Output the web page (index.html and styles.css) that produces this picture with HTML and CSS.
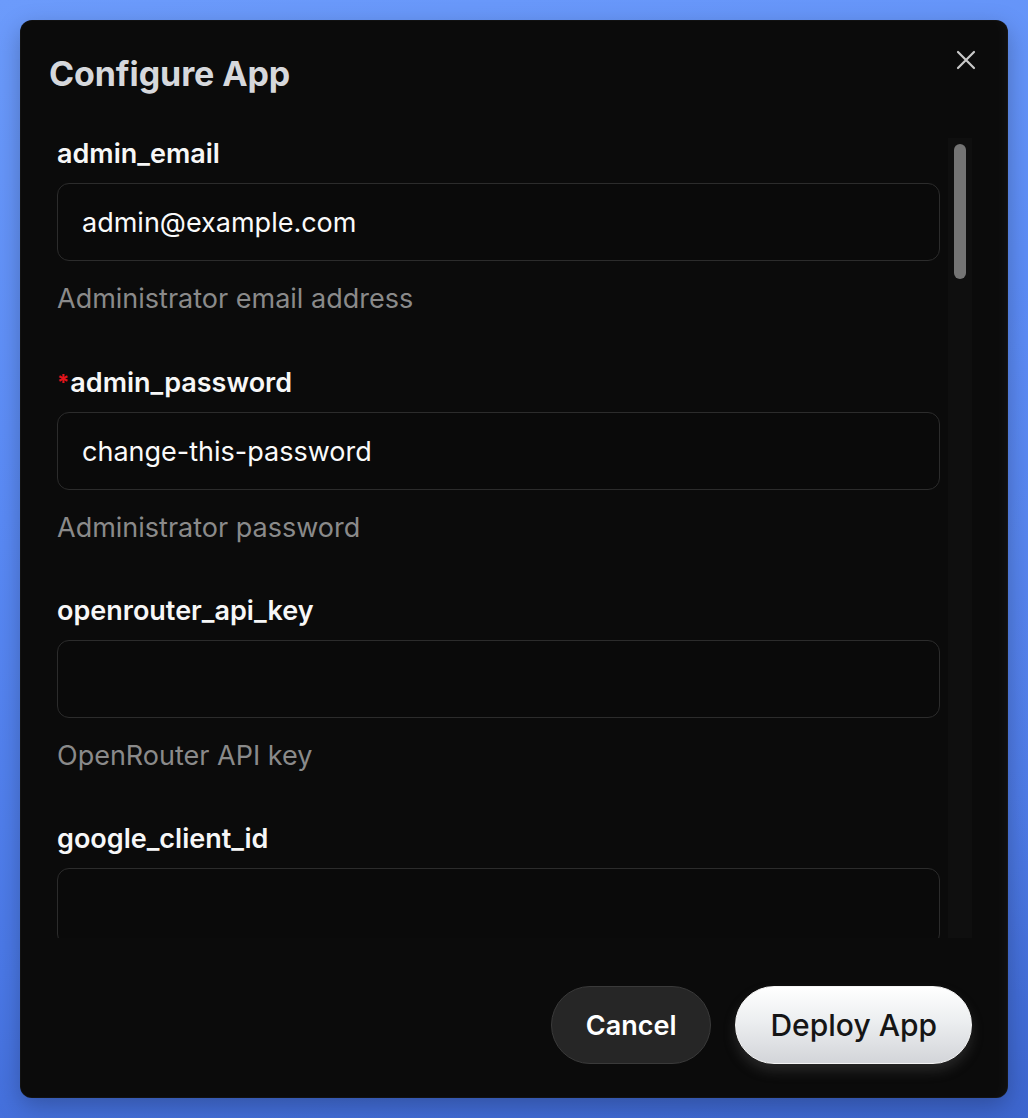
FILE: index.html
```html
<!DOCTYPE html>
<html lang="en">
<head>
<meta charset="utf-8">
<title>Configure App</title>
<link rel="stylesheet" href="styles.css">
</head>
<body>
<div class="backdrop">
  <div class="modal">
    <h2 class="title">Configure App</h2>
    <button class="close" aria-label="Close">
      <svg viewBox="0 0 24 24" width="24" height="24"><path d="M4 4L20 20M20 4L4 20" stroke="#c9c9c9" stroke-width="2.2" stroke-linecap="round" fill="none"/></svg>
    </button>
    <div class="scroll-wrap">
      <div class="scroll">
        <div class="field">
          <label class="label">admin_email</label>
          <input class="input" type="text" value="admin@example.com">
          <p class="help">Administrator email address</p>
        </div>
        <div class="field">
          <label class="label"><span class="req">*</span>admin_password</label>
          <input class="input" type="text" value="change-this-password">
          <p class="help">Administrator password</p>
        </div>
        <div class="field">
          <label class="label">openrouter_api_key</label>
          <input class="input" type="text" value="">
          <p class="help">OpenRouter API key</p>
        </div>
        <div class="field">
          <label class="label">google_client_id</label>
          <input class="input" type="text" value="">
        </div>
      </div>
      <div class="scrollbar"><div class="thumb"></div></div>
    </div>
    <div class="actions">
      <button class="btn btn-cancel">Cancel</button>
      <button class="btn btn-deploy">Deploy App</button>
    </div>
  </div>
</div>
</body>
</html>
```

FILE: styles.css
```css
* { box-sizing: border-box; }
html, body { margin: 0; padding: 0; }
body {
  width: 1028px;
  height: 1118px;
  overflow: hidden;
  font-family: Inter, "Noto Sans", "Liberation Sans", sans-serif;
  background:
    radial-gradient(ellipse 500px 700px at 1250px 650px, rgba(255,255,255,0.08), rgba(255,255,255,0) 70%),
    linear-gradient(170deg, #6c9bfb 0%, #5a8af5 40%, #4a78e6 75%, #3d66cf 100%);
}
.backdrop {
  padding: 20px;
  height: 1118px;
}
.modal {
  position: relative;
  width: 988px;
  height: 1078px;
  background: #0b0b0b;
  border-radius: 12px;
  box-shadow: 0 8px 24px rgba(0, 0, 0, 0.25), inset 0 0 0 1px rgba(255,255,255,0.03), inset -14px 0 14px -10px rgba(255,255,255,0.03);
  padding: 34px 36px 34px 29px;
  display: flex;
  flex-direction: column;
}
.title {
  margin: 0;
  font-size: 34px;
  line-height: 40px;
  font-weight: 700;
  color: #d6d8dc;
  letter-spacing: -0.1px;
}
.close {
  position: absolute;
  top: 28px;
  right: 30px;
  width: 24px;
  height: 24px;
  padding: 0;
  border: 0;
  background: transparent;
  display: flex;
}
.scroll-wrap {
  margin-top: 44px;
  height: 800px;
  display: flex;
}
.scroll {
  flex: 1;
  overflow: hidden;
  padding: 0 8px;
}
.scrollbar {
  width: 24px;
  background: #0f0f0f;
  padding: 6px;
}
.thumb {
  height: 135px;
  background: #747474;
  border-radius: 6px;
}
.field {
  display: flex;
  flex-direction: column;
  padding-bottom: 51px;
}
.label {
  font-size: 27px;
  line-height: 32px;
  font-weight: 600;
  color: #f7f7f7;
}
.req { color: #e5141b; font-size: 22px; font-weight: 700; vertical-align: 2px; margin-right: 1px; }
.input {
  margin-top: 13px;
  height: 78px;
  width: 100%;
  background: #0a0a0a;
  border: 1.5px solid #2c2c2c;
  border-radius: 12px;
  padding: 0 24px;
  font-family: inherit;
  font-size: 27px;
  color: #fafafa;
  outline: none;
}
.help {
  margin: 22px 0 0;
  font-size: 27px;
  line-height: 32px;
  color: #8a8a8a;
}
.actions {
  margin-top: 48px;
  display: flex;
  justify-content: flex-end;
  align-items: center;
  gap: 24px;
}
.btn {
  height: 78px;
  border-radius: 39px;
  padding: 0 34px;
  font-family: inherit;
  cursor: pointer;
}
.btn-cancel {
  background: #262626;
  border: 1.5px solid #3a3a3a;
  color: #ffffff;
  font-size: 27px;
  font-weight: 600;
}
.btn-deploy {
  background: linear-gradient(180deg, #ffffff 0%, #eceef0 45%, #d3d5d9 100%);
  border: 1.5px solid #f4f4f4;
  color: #151515;
  font-size: 30px;
  font-weight: 500;
  box-shadow: 0 7px 12px rgba(70, 70, 70, 0.45);
}
```
